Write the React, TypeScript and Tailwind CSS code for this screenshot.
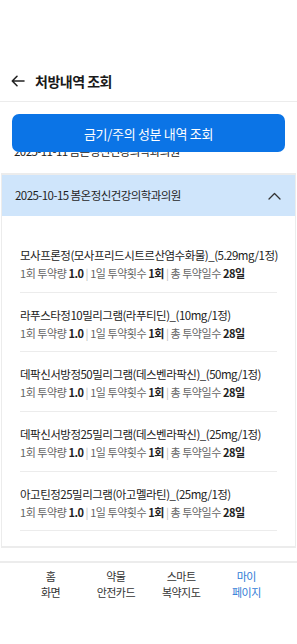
const drugs = [
  "모사프론정(모사프리드시트르산염수화물)_(5.29mg/1정)",
  "라푸스타정10밀리그램(라푸티딘)_(10mg/1정)",
  "데팍신서방정50밀리그램(데스벤라팍신)_(50mg/1정)",
  "데팍신서방정25밀리그램(데스벤라팍신)_(25mg/1정)",
  "아고틴정25밀리그램(아고멜라틴)_(25mg/1정)",
];

const navItems = [
  { top: "홈", bottom: "화면", active: false },
  { top: "약물", bottom: "안전카드", active: false },
  { top: "스마트", bottom: "복약지도", active: false },
  { top: "마이", bottom: "페이지", active: true },
];

export default function App() {
  return (
    <div
      className="w-[297px] h-[644px] bg-white flex flex-col overflow-hidden"
      style={{ fontFamily: '"Noto Sans CJK KR", "Noto Sans", sans-serif' }}
    >
      {/* Header */}
      <div className="h-[60px] shrink-0" />
      <div className="h-[42px] shrink-0 flex items-center border-b border-[#ececec]">
        <svg width="14" height="12" viewBox="0 0 14 12" className="ml-[11px]">
          <path d="M13 6H1.5M6 1.3 1.3 6 6 10.7" fill="none" stroke="#222" strokeWidth="1.6" strokeLinecap="round" strokeLinejoin="round" />
        </svg>
        <span className="ml-[10px] text-[14px] tracking-[-0.5px] font-bold text-[#1a1a1a] leading-none">처방내역 조회</span>
      </div>

      {/* Action button */}
      <div className="px-[12px] pt-[12px] shrink-0">
        <button className="w-full h-[38px] rounded-[7px] bg-[#0b74e6] text-white text-[13px] tracking-[-0.3px] leading-none">
          금기/주의 성분 내역 조회
        </button>
      </div>

      {/* Scrolled list: previous item partly hidden */}
      <div className="h-[11px] overflow-hidden shrink-0 px-[14px]">
        <div className="-mt-[10px] text-[11.5px] tracking-[-0.55px] leading-[18px] text-[#222]">2025-11-11 봄온정신건강의학과의원</div>
      </div>

      <div className="mx-[1px] border-x border-t-2 border-b-2 border-[#ececec] mt-[10px] shrink-0">
        <div className="h-[41px] bg-[#cfe5fb] flex items-center justify-between pl-[13px] pr-[14px]">
          <span className="text-[11.5px] tracking-[-0.55px] text-[#1f1f1f]">2025-10-15 봄온정신건강의학과의원</span>
          <svg width="13" height="8" viewBox="0 0 13 8">
            <path d="M1 7 6.5 1.5 12 7" fill="none" stroke="#333" strokeWidth="1.3" strokeLinecap="round" strokeLinejoin="round" />
          </svg>
        </div>
        <div className="pt-[17px] pb-[15px] px-[18px]">
          {drugs.map((name) => (
            <div key={name} className="pt-[13px] pb-[9.7px] border-b border-[#ececec]">
              <div className="text-[11.5px] tracking-[-0.5px] leading-[18px] text-[#222] whitespace-nowrap">{name}</div>
              <div className="text-[11px] tracking-[-0.45px] leading-[18px] text-[#666] whitespace-nowrap">
                1회 투약량 <b className="text-[#222]">1.0</b> <span className="text-[#bbb]">|</span> 1일 투약횟수{" "}
                <b className="text-[#222]">1회</b> <span className="text-[#bbb]">|</span> 총 투약일수{" "}
                <b className="text-[#222]">28일</b>
              </div>
            </div>
          ))}
        </div>
      </div>

      {/* Bottom nav */}
      <div className="mt-[13px] border-t-2 border-[#ececec] grid grid-cols-4 px-[18px] pt-[5px]">
        {navItems.map((n) => (
          <div
            key={n.top}
            className={`flex flex-col items-center text-[11px] tracking-[-0.5px] leading-[16px] ${n.active ? "text-[#2f7bd6]" : "text-[#333]"}`}
          >
            <span>{n.top}</span>
            <span>{n.bottom}</span>
          </div>
        ))}
      </div>
    </div>
  );
}
